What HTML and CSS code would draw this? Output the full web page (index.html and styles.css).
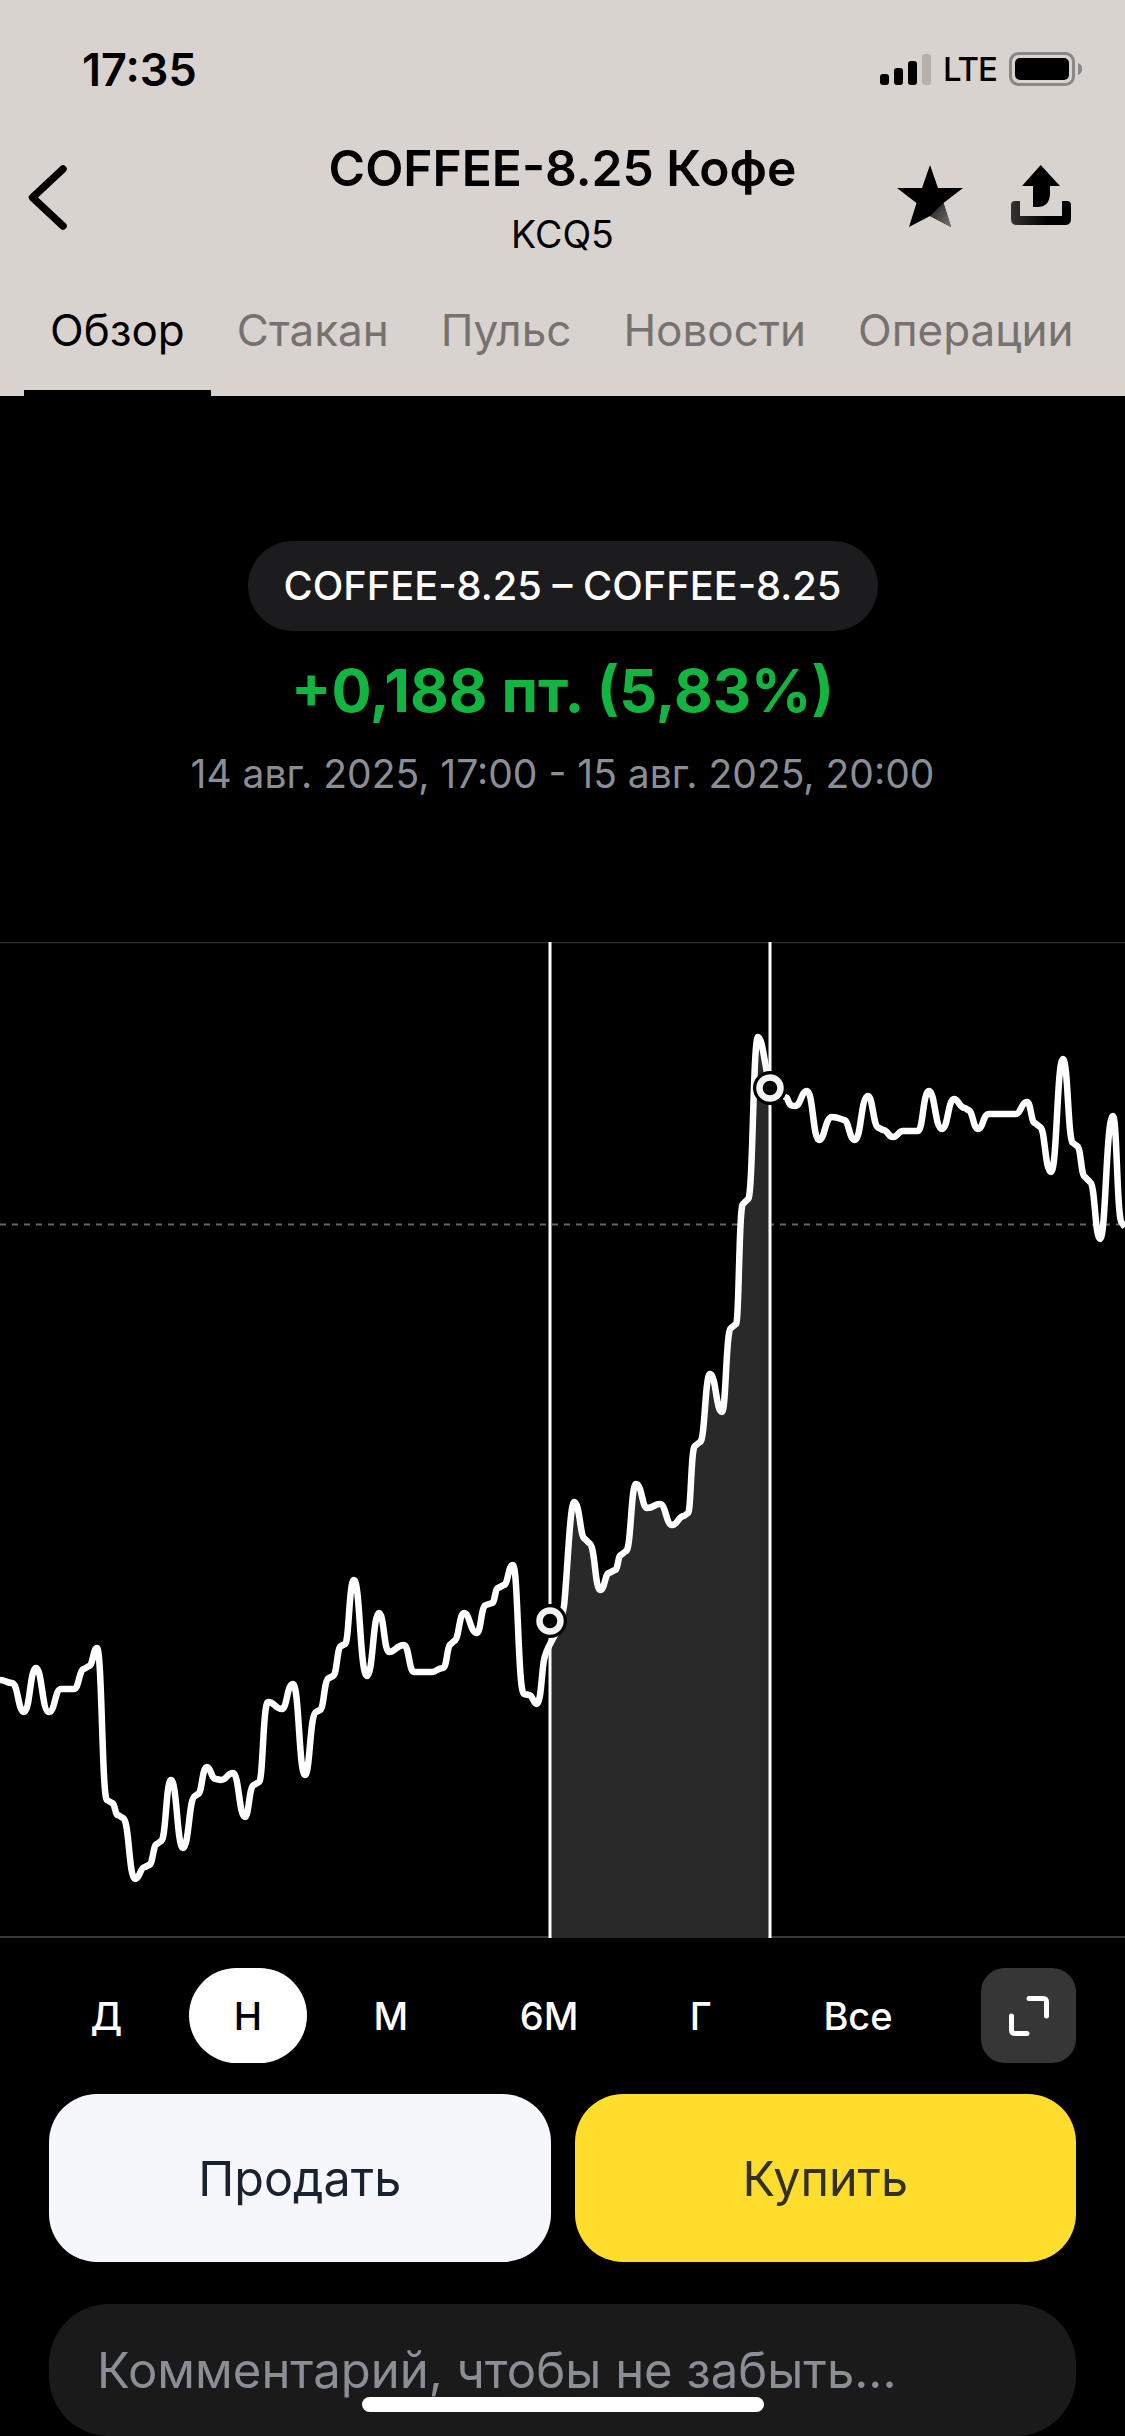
FILE: index.html
```html
<!DOCTYPE html>
<html lang="ru">
<head>
    <meta charset="UTF-8">
    <meta name="viewport" content="width=device-width, initial-scale=1.0">
    <title>COFFEE-8.25 Кофе</title>
    <link rel="stylesheet" href="styles.css">
</head>
<body>

<div class="screen">
    <header class="top">
        <div class="status-bar">
            <span class="time">17:35</span>
            <div class="status-icons">
                <svg class="signal" width="51" height="31" viewBox="0 0 51 31">
                    <rect x="0" y="20" width="9" height="11" rx="3" fill="#000"/>
                    <rect x="14" y="14" width="9" height="17" rx="3" fill="#000"/>
                    <rect x="28" y="7" width="9" height="24" rx="3" fill="#000"/>
                    <rect x="42" y="0" width="9" height="31" rx="3" fill="#b5b0ac"/>
                </svg>
                <span class="lte">LTE</span>
                <svg class="battery" width="73" height="34" viewBox="0 0 73 34">
                    <rect x="1.5" y="1.5" width="63" height="31" rx="8" fill="none" stroke="#8b8785" stroke-width="3"/>
                    <rect x="6" y="6" width="54" height="22" rx="5" fill="#000"/>
                    <path d="M69 11 C72 12 73 14 73 17 C73 20 72 22 69 23 Z" fill="#8b8785"/>
                </svg>
            </div>
        </div>

        <div class="nav-bar">
            <button class="back-btn">
                <svg width="40" height="66" viewBox="0 0 40 66">
                    <path d="M35 4 L4.5 32.5 L35 61" fill="none" stroke="#000" stroke-width="7.5" stroke-linecap="round" stroke-linejoin="round"/>
                </svg>
            </button>
            <div class="nav-title">
                <h1>COFFEE-8.25 Кофе</h1>
                <p>KCQ5</p>
            </div>
            <div class="nav-actions">
                <svg width="66" height="62" viewBox="0 0 66 62">
                    <defs>
                        <linearGradient id="starShade" x1="0" y1="0" x2="1" y2="1">
                            <stop offset="0" stop-color="#1a1a1a"/>
                            <stop offset="1" stop-color="#7a7876"/>
                        </linearGradient>
                    </defs>
                    <path d="M33 0 L41 23 L66 23 L46.5 38 L54 62 L33 51 L12 62 L19.5 38 L0 23 L25 23 Z" fill="#000"/>
                    <path d="M33 51 L46.5 38 L54 62 Z" fill="url(#starShade)"/>
                </svg>
                <svg width="60" height="60" viewBox="0 0 60 60">
                    <defs>
                        <linearGradient id="trayShade" x1="0" y1="0" x2="1" y2="0">
                            <stop offset="0" stop-color="#333"/>
                            <stop offset="0.6" stop-color="#000"/>
                        </linearGradient>
                    </defs>
                    <path d="M29.7 0 L49 21 H39 V28 Q39 42 26 42 H22 V21 H11 Z" fill="#000"/>
                    <path d="M0 40 Q0 36 4 36 H9 V51 H51 V36 H56 Q60 36 60 40 V54 Q60 60 54 60 H6 Q0 60 0 54 Z" fill="url(#trayShade)"/>
                </svg>
            </div>
        </div>

        <nav class="tabs">
            <a class="tab active">Обзор</a>
            <a class="tab">Стакан</a>
            <a class="tab">Пульс</a>
            <a class="tab">Новости</a>
            <a class="tab">Операции</a>
        </nav>
    </header>

    <section class="summary">
        <div class="range-pill">COFFEE-8.25 – COFFEE-8.25</div>
        <div class="change">+0,188 пт. (5,83%)</div>
        <div class="dates">14 авг. 2025, 17:00 - 15 авг. 2025, 20:00</div>
    </section>

    <svg class="chart" width="1125" height="996" viewBox="0 942 1125 996">
        <line x1="0" y1="942.5" x2="1125" y2="942.5" stroke="#2e2e2e" stroke-width="1.5"/>
        <line x1="0" y1="1937" x2="1125" y2="1937" stroke="#3a3a3a" stroke-width="2"/>
        <line x1="0" y1="1224.5" x2="1125" y2="1224.5" stroke="#666" stroke-width="2" stroke-dasharray="6 6"/>

        <!-- selected range -->
        <path fill="#292929" d="M550 1938 L550 1621 L564 1606 C567 1580 570 1502 574 1502 C580 1502 580 1539 585 1539 L589 1543 C595 1543 595 1590 600 1590 C605 1590 605 1573 609 1573 L615 1570 C618 1570 618 1555 621 1555 L626 1551 C631 1551 631 1484 636 1484 C642 1484 642 1508 647 1508 C654 1508 654 1504 660 1504 C666 1504 666 1525 672 1525 C678 1525 678 1516 684 1516 L688 1513 C691 1513 691 1446 695 1446 L700 1442 C705 1442 705 1374 710 1374 C716 1374 716 1412 722 1412 C726 1412 726 1328 731 1328 L736 1324 C739 1324 739 1204 743 1204 L748 1199 C753 1199 753 1037 758 1037 C762 1037 764 1060 770 1088 L770 1938 Z"/>
        <line x1="550" y1="942" x2="550" y2="1938" stroke="#fff" stroke-width="3"/>
        <line x1="770" y1="942" x2="770" y2="1938" stroke="#fff" stroke-width="3"/>

        <path class="curve" d="M0 1680 C6 1680 6 1683 12 1683 C18 1683 18 1712 24 1712 C30 1712 30 1668 36 1668 C42 1668 42 1712 49 1712 C55 1712 55 1689 61 1689 L74 1689 C79 1689 79 1669 84 1669 L89 1666 C93 1666 93 1648 97 1648 C102 1648 102 1800 107 1800 L112 1803 C115 1803 115 1815 118 1815 L123 1818 C129 1818 129 1879 135 1879 C140 1879 140 1867 145 1867 L149 1865 C153 1865 153 1844 157 1844 L161 1841 C166 1841 166 1780 171 1780 C177 1780 177 1848 183 1848 C189 1848 189 1796 195 1796 L198 1794 C202 1794 202 1767 207 1767 C211 1767 211 1779 216 1779 L221 1780 C227 1780 227 1773 233 1773 C239 1773 239 1817 245 1817 C249 1817 249 1785 254 1785 L259 1782 C263 1782 263 1702 268 1702 C275 1702 275 1709 282 1709 C287 1709 287 1684 293 1684 C299 1684 299 1775 305 1775 C310 1775 310 1712 316 1712 L320 1710 C324 1710 324 1678 329 1678 L333 1676 C337 1676 337 1646 341 1646 L345 1644 C349 1644 349 1580 354 1580 C360 1580 360 1676 367 1676 C373 1676 373 1613 379 1613 C384 1613 384 1652 389 1652 C396 1652 396 1645 404 1645 C409 1645 409 1672 414 1672 L432 1672 C437 1672 437 1668 443 1668 C447 1668 447 1644 451 1644 L454 1641 C459 1641 459 1613 464 1613 C470 1613 470 1633 477 1633 C481 1633 481 1605 486 1605 L492 1603 C495 1603 495 1588 498 1588 L504 1585 C508 1585 508 1565 513 1565 C518 1565 518 1694 524 1694 L529 1695 C533 1695 533 1704 537 1704 C541 1704 542 1668 544 1660 C548 1640 558 1640 564 1606 C567 1580 570 1502 574 1502 C580 1502 580 1539 585 1539 L589 1543 C595 1543 595 1590 600 1590 C605 1590 605 1573 609 1573 L615 1570 C618 1570 618 1555 621 1555 L626 1551 C631 1551 631 1484 636 1484 C642 1484 642 1508 647 1508 C654 1508 654 1504 660 1504 C666 1504 666 1525 672 1525 C678 1525 678 1516 684 1516 L688 1513 C691 1513 691 1446 695 1446 L700 1442 C705 1442 705 1374 710 1374 C716 1374 716 1412 722 1412 C726 1412 726 1328 731 1328 L736 1324 C739 1324 739 1204 743 1204 L748 1199 C753 1199 753 1037 758 1037 C762 1037 764 1060 770 1088 C776 1090 780 1094 787 1098 C790 1106 791 1106 795 1106 C801 1106 801 1091 807 1091 C813 1091 813 1140 819 1140 C825 1140 825 1117 832 1117 C838 1117 840 1119 844 1120 C849 1120 849 1140 855 1140 C861 1140 861 1096 868 1096 C873 1096 873 1128 879 1128 L883 1130 C888 1130 888 1137 893 1137 C898 1137 898 1131 903 1131 L918 1131 C923 1131 923 1091 929 1091 C935 1091 935 1129 942 1129 C948 1129 948 1099 954 1099 C959 1099 959 1108 965 1108 L968 1110 C973 1110 973 1129 978 1129 C983 1129 983 1114 989 1114 L1016 1114 C1021 1114 1021 1102 1027 1102 C1031 1102 1031 1123 1035 1123 L1040 1127 C1045 1127 1045 1172 1051 1172 C1057 1172 1057 1059 1063 1059 C1068 1059 1068 1143 1073 1143 L1077 1146 C1081 1146 1081 1177 1085 1177 L1090 1182 C1095 1182 1095 1239 1100 1239 C1106 1239 1106 1116 1113 1116 C1117 1116 1117 1223 1122 1223 L1125 1227"/>

        <circle cx="550" cy="1621" r="17" fill="#000"/>
        <circle cx="550" cy="1621" r="10.5" fill="#000" stroke="#f2f2f2" stroke-width="6.5"/>
        <circle cx="770" cy="1088" r="17" fill="#000"/>
        <circle cx="770" cy="1088" r="10.5" fill="#000" stroke="#f2f2f2" stroke-width="6.5"/>
    </svg>

    <div class="periods">
        <span class="period">Д</span>
        <span class="period active">Н</span>
        <span class="period">М</span>
        <span class="period">6М</span>
        <span class="period">Г</span>
        <span class="period">Все</span>
        <button class="expand-btn">
            <svg width="40" height="40" viewBox="0 0 40 40">
                <path d="M20 2.5 H34 Q37.5 2.5 37.5 6 V20 M2.5 20 V34 Q2.5 37.5 6 37.5 H18" fill="none" stroke="#fff" stroke-width="5" stroke-linecap="round"/>
            </svg>
        </button>
    </div>

    <div class="trade-buttons">
        <button class="sell-btn">Продать</button>
        <button class="buy-btn">Купить</button>
    </div>

    <div class="comment-box">Комментарий, чтобы не забыть...</div>

    <div class="home-indicator"></div>
</div>

</body>
</html>
```

FILE: styles.css
```css
* {
    box-sizing: border-box;
}
body {
    margin: 0;
    background-color: #000;
    font-family: Inter, "Noto Sans", sans-serif;
}
.screen {
    position: relative;
    width: 1125px;
    height: 2436px;
    overflow: hidden;
    background-color: #000;
}
button {
    border: none;
    padding: 0;
    background: none;
    font-family: inherit;
}

/* header */
.top {
    height: 396px;
    background-color: #d9d3cf;
    color: #000;
}
.status-bar {
    display: flex;
    justify-content: space-between;
    align-items: center;
    height: 110px;
    padding: 28px 43px 0 82px;
}
.time {
    font-size: 45px;
    font-weight: 600;
}
.status-icons {
    display: flex;
    align-items: center;
    gap: 12px;
}
.lte {
    font-size: 33px;
    font-weight: 500;
    letter-spacing: -1px;
    line-height: 34px;
}
.nav-bar {
    display: grid;
    grid-template-columns: 1fr auto 1fr;
    height: 160px;
}
.back-btn {
    justify-self: start;
    margin: 55px 0 0 28px;
    height: 66px;
}
.nav-title {
    padding-top: 30px;
    text-align: center;
}
.nav-title h1 {
    margin: 0;
    font-size: 49.7px;
    font-weight: 600;
    line-height: 56px;
}
.nav-title p {
    margin: 17px 0 0;
    font-size: 37.5px;
    line-height: 44px;
}
.nav-actions {
    display: flex;
    justify-content: flex-end;
    gap: 48px;
    padding: 55px 54px 0 0;
}
.tabs {
    display: flex;
    height: 126px;
    padding-left: 24px;
}
.tab {
    height: 126px;
    padding: 32px 26px 0;
    border-bottom: 6px solid transparent;
    font-size: 44px;
    line-height: 56px;
    color: #76726f;
}
.tab.active {
    border-bottom-color: #000;
    color: #000;
}

/* summary */
.summary {
    display: flex;
    flex-direction: column;
    align-items: center;
    height: 546px;
    padding-top: 145px;
}
.range-pill {
    width: 630px;
    height: 90px;
    border-radius: 45px;
    background-color: #1c1c1e;
    color: #fff;
    font-size: 39.8px;
    font-weight: 500;
    line-height: 90px;
    text-align: center;
}
.change {
    margin-top: 24px;
    color: #12b53f;
    font-size: 59.5px;
    font-weight: 700;
    line-height: 70px;
}
.dates {
    margin-top: 26px;
    color: #8b8e96;
    font-size: 39px;
    line-height: 46px;
}

/* chart */
.chart {
    display: block;
}
.curve {
    fill: none;
    stroke: #fff;
    stroke-width: 6.5;
    stroke-linejoin: round;
}

/* period switch */
.periods {
    display: flex;
    align-items: center;
    gap: 22.5px;
    height: 95px;
    margin-top: 30px;
    padding: 0 49px 0 46px;
}
.period {
    height: 95px;
    padding: 1px 44.5px 0;
    border-radius: 48px;
    color: #fff;
    font-size: 38px;
    font-weight: 500;
    line-height: 95px;
}
.period.active {
    background-color: #fff;
    color: #000;
}
.expand-btn {
    display: flex;
    justify-content: center;
    align-items: center;
    width: 95px;
    height: 95px;
    margin-left: auto;
    border-radius: 24px;
    background-color: #363636;
}

/* buy / sell */
.trade-buttons {
    display: flex;
    gap: 24px;
    margin-top: 31px;
    padding: 0 49px;
}
.sell-btn,
.buy-btn {
    flex: 1;
    height: 168px;
    border-radius: 48px;
    font-size: 48.5px;
}
.sell-btn {
    background-color: #f5f7fa;
    color: #1a2230;
}
.buy-btn {
    background-color: #ffdd2d;
    color: #333125;
}
.comment-box {
    height: 132px;
    margin: 42px 49px 0;
    padding: 37px 0 0 48px;
    border-radius: 60px;
    background-color: #1a1a1a;
    color: #8b8e95;
    font-size: 49px;
    line-height: 60px;
}
.home-indicator {
    position: absolute;
    left: 362px;
    bottom: 24px;
    width: 402px;
    height: 15px;
    border-radius: 8px;
    background-color: #fff;
}
```
